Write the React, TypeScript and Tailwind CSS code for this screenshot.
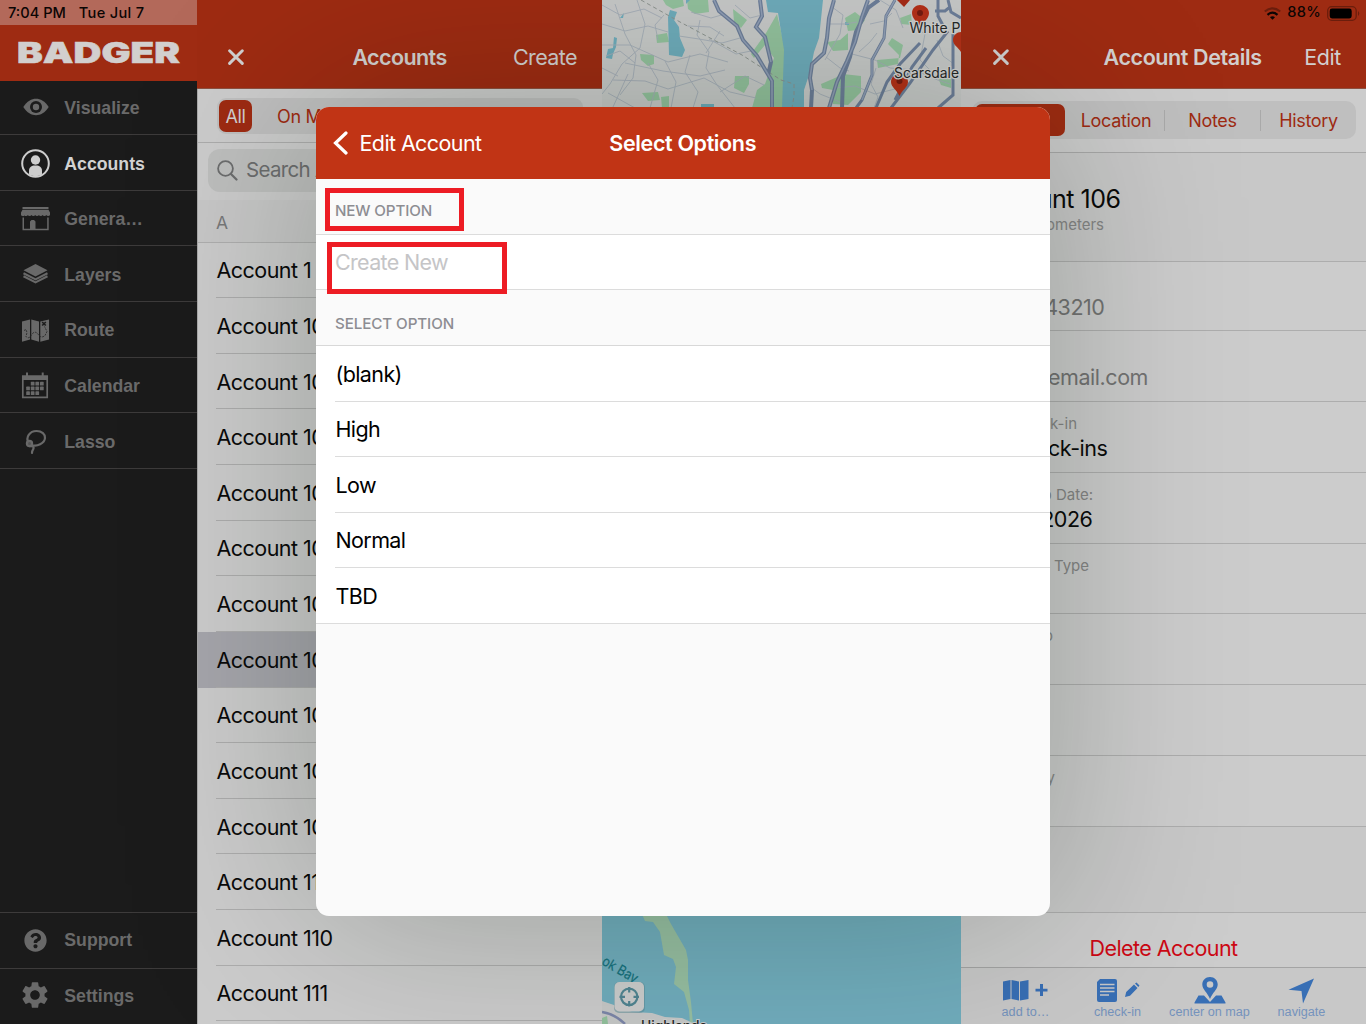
import React from 'react'
import { FaQuestionCircle } from 'react-icons/fa'
import { MdSettings } from 'react-icons/md'

const accounts = [
    'Account 1', 'Account 100', 'Account 101', 'Account 102', 'Account 103',
    'Account 104', 'Account 105', 'Account 106', 'Account 107', 'Account 108',
    'Account 109', 'Account 11', 'Account 110', 'Account 111',
]

const options = ['(blank)', 'High', 'Low', 'Normal', 'TBD']

const details = [
    { label: '', value: '9876543210', muted: true, labelWidth: 'w-[100px]', valueWidth: 'w-[143.5px]' },
    { label: '', value: 'test@email.com', muted: true, labelWidth: 'w-[100px]', valueWidth: 'w-[187px]' },
    { label: 'Last Check-in', value: 'No Check-ins', muted: false, labelWidth: 'w-[116px]', valueWidth: 'w-[146.5px]' },
    { label: 'Follow Up Date:', value: '7/7/2026', muted: false, labelWidth: 'w-[132px]', valueWidth: 'w-[131.5px]' },
    { label: 'Account Type', value: '', muted: false, labelWidth: 'w-[128px]', valueWidth: 'w-[100px]' },
    { label: 'Account Info', value: '', muted: false, labelWidth: 'w-[92px]', valueWidth: 'w-[100px]' },
    { label: '', value: '', muted: false, labelWidth: 'w-[100px]', valueWidth: 'w-[100px]' },
    { label: 'Territory', value: '', muted: false, labelWidth: 'w-[94px]', valueWidth: 'w-[100px]' },
]

const EyeIcon = () => (
    <svg width="32" height="32" viewBox="0 0 32 32">
        <path d="M4.3 15C8 9.2 12.6 6.8 17 6.8S26 9.2 29.7 15C26 20.8 21.4 23.2 17 23.2S8 20.8 4.3 15Z" fill="#696969" />
        <circle cx="17" cy="15" r="6" fill="#1b1b1b" />
        <circle cx="17" cy="15" r="3.2" fill="#696969" />
    </svg>
)

const PersonIcon = () => (
    <svg width="32" height="32" viewBox="0 0 32 32">
        <circle cx="16.5" cy="15.5" r="13.3" fill="none" stroke="#cdcdcd" strokeWidth="2" />
        <circle cx="16.5" cy="12" r="4.7" fill="#cdcdcd" />
        <path d="M10 26.5V22.5C10 19.5 12.5 17.6 14.5 17.4H18.5C20.5 17.6 23 19.5 23 22.5V26.5C19 28.5 14 28.5 10 26.5Z" fill="#cdcdcd" />
    </svg>
)

const StoreIcon = () => (
    <svg width="32" height="32" viewBox="0 0 32 32" fill="#696969">
        <rect x="3.5" y="4" width="26" height="2" />
        <path d="M3.5 6.8H29.5L31 9.5V12A2 1.6 0 0 1 27.3 12A2 1.6 0 0 1 23.6 12A2 1.6 0 0 1 19.9 12A2 1.6 0 0 1 16.2 12A2 1.6 0 0 1 12.5 12A2 1.6 0 0 1 8.8 12A2 1.6 0 0 1 5.5 12.5A2 1.6 0 0 1 2 12V9.5Z" />
        <path d="M3.5 14.5H5V25.8H11V18.5L12.5 17H15L16.5 18.5V25.8H28.2V14.5H29.7V27.3H3.5Z" />
    </svg>
)

const LayersIcon = () => (
    <svg width="32" height="32" viewBox="0 0 32 32">
        <path d="M16.5 5L28.5 11.2L16.5 17.6L4.5 11.2Z" fill="#696969" />
        <path d="M4.5 14.2L16.5 20.4L28.5 14.2M4.5 17.2L16.5 23.4L28.5 17.2" fill="none" stroke="#696969" strokeWidth="2.1" />
    </svg>
)

const RouteIcon = () => (
    <svg width="32" height="32" viewBox="0 0 32 32">
        <path d="M3 6.5L11 4.5V24.5L3 26.8ZM12.3 4.5L20 6.5V26.8L12.3 24.5ZM21.3 6.5L30 4.5V24.5L21.3 26.8Z" fill="#696969" />
        <path d="M5 15.5L7 14.5L8 17.5L7 21.5Q10 25 13 19Q16 15.5 19 19Q22 24 26 20.5L28 16.5L25.5 11.5" fill="none" stroke="#2c2c2c" strokeWidth=".9" strokeDasharray="2 1" />
        <path d="M23.2 7L26.8 10.5M26.8 7L23.2 10.5" stroke="#1d1d1d" strokeWidth="1.6" />
    </svg>
)

const CalendarIcon = () => (
    <svg width="32" height="32" viewBox="0 0 32 32">
        <path d="M3.8 6.3H28.2V27.3H3.8Z" fill="none" stroke="#696969" strokeWidth="1.7" />
        <path d="M3 5.5H29V10H3Z" fill="#696969" />
        <path d="M8 2.5V6M23.7 2.5V6" stroke="#696969" strokeWidth="2" />
        <g fill="#696969">
            <rect x="11.8" y="11.8" width="3.7" height="3.7" rx=".6" />
            <rect x="16.4" y="11.8" width="3.7" height="3.7" rx=".6" />
            <rect x="21" y="11.8" width="3.7" height="3.7" rx=".6" />
            <rect x="7.2" y="16.6" width="3.7" height="3.7" rx=".6" />
            <rect x="11.8" y="16.6" width="3.7" height="3.7" rx=".6" />
            <rect x="16.4" y="16.6" width="3.7" height="3.7" rx=".6" />
            <rect x="21" y="16.6" width="3.7" height="3.7" rx=".6" />
            <rect x="7.2" y="21.3" width="3.7" height="3.7" rx=".6" />
            <rect x="11.8" y="21.3" width="3.7" height="3.7" rx=".6" />
            <rect x="16.4" y="21.3" width="3.7" height="3.7" rx=".6" />
        </g>
    </svg>
)

const LassoIcon = () => (
    <svg width="32" height="32" viewBox="0 0 32 32" fill="none" stroke="#696969" strokeWidth="2.2" strokeLinecap="round">
        <path d="M9.5 16.5C6.5 11.5 10.5 5 17.5 5C23 5 26.3 8.2 26 12C25.5 17.5 18 21 12.5 19" />
        <circle cx="10.5" cy="17.5" r="2.6" fill="#555" />
        <path d="M10 20C12.5 20.5 14.5 20 14.6 21.5C14.8 24 12.8 24 13 27" />
    </svg>
)

const CloseIcon = () => (
    <svg width="17" height="17" viewBox="0 0 17 17" stroke="#d0d0d0" strokeWidth="2.9" strokeLinecap="round">
        <path d="M1.6 1.7L14.3 14.4M14.3 1.7L1.6 14.4" />
    </svg>
)

const MenuItem = ({ icon, label, active = false }: { icon: React.ReactNode, label: string, active?: boolean }) => {
    return (
        <div className="flex h-[55.65px] shrink-0 items-center gap-[13.3px] border-b border-[#3d3b3b] pl-[19px]">
            <div className="flex w-8 justify-center">{icon}</div>
            <span className={active ? 'text-[#d2d2d2]' : 'text-[#6a6a6a]'}>{label}</span>
        </div>
    )
}

const Sidebar = () => {
    return (
        <div className="flex w-[197px] shrink-0 flex-col bg-[#1b1b1b] font-['Liberation_Sans',sans-serif] text-[17.7px] font-bold">
            <div className="h-[25px] shrink-0 bg-[#b3695a] pl-2 font-['Inter',sans-serif] text-[14.6px] leading-[26px] font-medium text-[#0b0504]">
                <span>7:04 PM</span>
                <span className="ml-[13px] tracking-[0.3px]">Tue Jul 7</span>
            </div>
            <div className="relative z-10 h-14 shrink-0 bg-[#9e2b12]">
                <svg width="197" height="56" viewBox="0 0 197 56">
                    <text x="17" y="38.4" textLength="163" lengthAdjust="spacingAndGlyphs" fontFamily="Inter, sans-serif" fontWeight="900" fontSize="28.2" fill="#d2cfce" stroke="#d2cfce" strokeWidth=".5">BADGER</text>
                </svg>
            </div>
            <div className="-mt-[1.65px] flex flex-col *:pt-[3px]">
                <MenuItem icon={<EyeIcon />} label="Visualize" />
                <MenuItem icon={<PersonIcon />} label="Accounts" active />
                <MenuItem icon={<StoreIcon />} label="Genera…" />
                <MenuItem icon={<LayersIcon />} label="Layers" />
                <MenuItem icon={<RouteIcon />} label="Route" />
                <MenuItem icon={<CalendarIcon />} label="Calendar" />
                <MenuItem icon={<LassoIcon />} label="Lasso" />
            </div>
            <div className="mt-auto border-t border-[#3d3b3b]">
                <MenuItem icon={<FaQuestionCircle size={23} color="#696969" />} label="Support" />
                <div className="flex h-[55px] items-center gap-[13.3px] pl-[19px] text-[#6a6a6a]">
                    <div className="flex w-8 justify-center pb-1">
                        <MdSettings size={32} color="#696969" />
                    </div>
                    <span>Settings</span>
                </div>
            </div>
        </div>
    )
}

const AccountsPanel = () => {
    return (
        <div className="flex w-[405px] shrink-0 flex-col border-l border-[#a9a9a9] bg-[#cccccc]">
            <div className="-ml-px grid h-[89px] shrink-0 grid-cols-3 items-center border-b border-[#8d5040] bg-[#9e2b12] pt-[26px] pr-[25px] pl-[31px] text-[21.5px] tracking-[-0.6px] text-[#d2cfce]">
                <CloseIcon />
                <span className="-ml-[6px] text-center font-semibold">Accounts</span>
                <span className="text-right">Create</span>
            </div>
            <div className="h-[54px] shrink-0 border-b border-[#acacac] px-[19px] pt-[9px]">
                <div className="flex h-9 items-center rounded-[9px] bg-[#bfbfbf] pl-[2px] text-[18px] tracking-[-0.35px]">
                    <div className="flex h-8 w-[33px] items-center justify-center rounded-[7px] bg-[#9e2b12] text-[#d2cfce]">All</div>
                    <span className="ml-[25px] text-[#9e2b12]">On Map</span>
                </div>
            </div>
            <div className="h-[57px] shrink-0 px-[10px] pt-[6px]">
                <div className="flex h-[43px] items-center gap-2 rounded-[12px] bg-[#bebfbe] pl-[9px] text-[20.5px] tracking-[-0.7px] text-[#6c6d6e]">
                    <svg width="21" height="21" viewBox="0 0 21 21" fill="none" stroke="#6c6d6e" strokeWidth="1.8" strokeLinecap="round">
                        <circle cx="8.5" cy="8.5" r="7.4" />
                        <path d="M14 14L19.5 19.5" strokeWidth="2.2" />
                    </svg>
                    <span>Search Accounts</span>
                </div>
            </div>
            <div className="flex h-[41.6px] shrink-0 items-center bg-[#c8c8c8] pt-[5px] pl-[18px] text-[17.5px] text-[#78797a]">A</div>
            <div className="border-t border-[#afafaf]">
                {accounts.map((name) => (
                    <div key={name} className={name === 'Account 106' ? 'h-[55.63px] bg-[#a6a6ac] pl-[18px]' : 'h-[55.63px] pl-[18px]'}>
                        <div className="flex h-full items-center border-b border-[#adadad] pt-px pl-[0.5px] text-[21.5px] tracking-[-0.53px] text-[#0a0a0a]">{name}</div>
                    </div>
                ))}
            </div>
        </div>
    )
}

const MapPanel = () => {
    return (
        <svg className="shrink-0" width="359" height="1024" viewBox="602 0 359 1024">
            <rect x="602" y="0" width="359" height="1024" fill="#c6c8c7" />
            <g fill="#92c09c">
                <path d="M663 0H683L684 6L673 9L666 5ZM687 0H708L709 12L695 14L688 9ZM733 9L747 20L741 28L734 22ZM766 33L777 14L785 48L784 108H752L757 90L765 84L770 70L774 58L765 45L754 58L751 54Z" />
                <path d="M656 35L667 33L669 42L657 43ZM640 54L654 55V64L648 66L641 60ZM735 76H749V84L744 93L734 88ZM642 93L658 92L660 100L648 101ZM661 97L669 96V108H662ZM827 42L840 40L848 33V50L833 51ZM845 18L855 12L865 20L858 30L848 31ZM821 84L835 78L843 74L861 76V92L848 105L833 104V90L822 88ZM877 60L900 58L903 45L892 38L888 44L899 55L898 64L878 68ZM900 18L911 14L912 25L901 24ZM938 78H951V88L941 85Z" />
            </g>
            <g fill="#6eabba">
                <path d="M766 0H823L819 38L814 52L810 72L804 90V108H782L784 50L778 13L768 12Z" />
                <path d="M686 0H690L686 4ZM677 12L670 10L668 17L669 55L682 57L685 50L680 38L679 27L674 20ZM614 37L617 38L616 47L613 54L612 59L606 58L608 49L613 48ZM701 104H714V108H701ZM845 22L849 23V25H845ZM620 18L624 13L623 18Z" />
            </g>
            <g fill="none" stroke="#a3abb6" strokeWidth=".9">
                <path d="M602 5L620 15L644 9L662 18M602 24L625 31L648 26L668 32M615 4L625 34L636 55L633 78L620 95M602 45H630L668 62L700 54L728 62M637 0L645 24L640 48L622 64L610 84L602 94M625 63L663 71L700 76L725 70M613 80L645 81L668 89L704 78L730 92L756 98M608 93L635 108M628 74L613 107M648 63L658 80L650 108M665 61L676 82L671 108M690 55L685 72L698 92L693 108" />
                <path d="M691 12L711 18L725 14M688 26L710 27L724 36M679 36L699 39L722 43L740 38M700 20L697 35L709 52L706 68L717 85L735 108M720 31L706 53M735 5L750 18L762 15M720 92L745 76L764 85M664 15L655 25L658 40M602 68L618 76M606 56L620 51L635 63M709 39L736 54L751 51" />
                <path d="M827 24H845L857 22M832 7L843 15L840 34L825 60M826 57L840 68L849 71M859 52L870 42L877 33M870 24L884 21L892 13M852 54L875 60L890 68L915 70L935 79L950 84M835 88L855 86L875 94L895 89M812 88L820 94L840 102M910 24L925 34L920 60L932 72M880 0L896 10L903 28M937 40L943 56L954 64M876 68L871 84L878 97L874 108" />
            </g>
            <path d="M641 0L680 22L742 55L781 80L794 84V96L792 108" fill="none" stroke="#8b928e" strokeDasharray="4 3" />
            <g fill="none" stroke="#6c7d98" strokeWidth="4">
                <path d="M714 0L719 11L737 26L743 40L757 56L766 71L772 81L772 108M760 0L762 16L756 27L765 37L771 62L768 75M834 0L829 18L827 38L824 53L812 64L810 78L812 90L811 108M868 0L862 17L855 42L847 61L837 82L829 108M842 108L843 76L850 57L856 32L868 8L879 0" />
                <path d="M895 0L886 16L884 38L872 60L872 75L862 100L856 108M920 43L900 64L887 82L876 108M948 31L933 50L910 83L891 108M926 48L912 67L895 100M953 34V95L938 108M938 0V16L946 31M948 0L951 12L961 18M935 11H945L950 7" strokeWidth="3" />
            </g>
            <g fill="none" stroke="#8f9db4" strokeWidth="1.5">
                <path d="M714 0L719 11L737 26L743 40L757 56L766 71L772 81V108M760 0L762 16L756 27L765 37L771 62M834 0L829 18L827 38L824 53L812 64L810 78L812 90M868 0L862 17L855 42L847 61L837 82L829 108M895 0L886 16L884 38L872 60L872 75L862 100" />
            </g>
            <path d="M897 0H910L904 7Z" fill="#a52b16" />
            <g fill="#b33018">
                <path d="M912 13C912 8 916 5 920 5S929 8 929 13C929 19 923 22 920 28C918 22 912 19 912 13Z" />
                <circle cx="920" cy="13" r="3" fill="#741b10" />
                <path d="M953 40C953 35 957 32 961 32V52C958 47 953 45 953 40Z" />
                <path d="M891 82C891 77 895 74 899.5 74S908 77 908 82C908 87 902 90 899.5 96C897 90 891 87 891 82Z" />
                <circle cx="899.5" cy="81" r="3" fill="#741b10" />
            </g>
            <g fontFamily="Inter, sans-serif" fontSize="14" fill="#262828" stroke="#cfd0cf" strokeWidth="2.5" paintOrder="stroke" strokeLinejoin="round">
                <text x="909.5" y="32.5">White P</text>
                <text x="894" y="77.5" textLength="65" lengthAdjust="spacingAndGlyphs">Scarsdale</text>
            </g>
            <rect x="602" y="900" width="359" height="124" fill="#71adbd" />
            <path d="M640 910H664L671 924L686 950L688 960V980L691 1002L693 1024H690L689 1010L684 992L674 984L676 967L673 959L664 955L660 932L653 922L645 921Z" fill="#97bfa2" />
            <path d="M602 1001L617 1006L632 1012L652 1013L665 1017L682 1018L695 1024H602Z" fill="#c6c8c7" />
            <path d="M602 1012Q615 1014 625 1024" fill="none" stroke="#7c86a8" strokeWidth="2.5" />
            <path d="M602 1018L607 1016L608 1024H602Z" fill="#92c09c" />
            <text x="601" y="964" transform="rotate(30 601 964)" textLength="39" lengthAdjust="spacingAndGlyphs" fontFamily="Inter, sans-serif" fontSize="14" fill="#15707c" stroke="#15707c" strokeWidth=".2">ok Bay</text>
            <text x="641" y="1031" fontFamily="Inter, sans-serif" fontSize="14" fontWeight="500" fill="#262828" stroke="#cfd0cf" strokeWidth="2" paintOrder="stroke" textLength="66" lengthAdjust="spacingAndGlyphs">Highlands</text>
            <rect x="614" y="982" width="31" height="31" rx="5" fill="#5a8894" opacity=".5" />
            <rect x="614.5" y="982" width="29.5" height="29.5" rx="5" fill="#cccdcd" />
            <g fill="none" stroke="#518592" strokeWidth="2.2">
                <circle cx="629.2" cy="996.8" r="8.2" />
                <path d="M629.2 987V992.5M629.2 1001V1006.5M619.5 996.8H625M633.5 996.8H639" />
            </g>
        </svg>
    )
}

const Tool = ({ label, children }: { label: string, children: React.ReactNode }) => {
    return (
        <div className="flex w-[92px] flex-col items-center">
            <svg width="50" height="28" viewBox="0 0 50 28" fill="#386fb5">{children}</svg>
            <span className="text-[12.65px] leading-[14px] whitespace-nowrap text-[#7593bd]">{label}</span>
        </div>
    )
}

const DetailsPanel = () => {
    return (
        <div className="flex w-[405px] shrink-0 flex-col bg-[#cccccc]">
            <div className="flex h-[89px] shrink-0 flex-col border-b border-[#8d5040] bg-[#9e2b12] text-[#d2cfce]">
                <div className="flex h-[26px] items-center justify-end gap-[6px] pr-[6px] text-[14.6px] font-medium text-[#0b0504]">
                    <svg width="17" height="13" viewBox="0 0 17 13" fill="none" stroke="#0b0504" strokeWidth="2.2">
                        <path d="M.8 4.5Q8.5 -1.8 16.2 4.5" stroke="#6b1d0c" />
                        <path d="M3.5 7.8Q8.5 3.5 13.5 7.8" />
                        <path d="M6 10.2Q8.5 8.3 11 10.2L8.5 12.8Z" fill="#0b0504" stroke="none" />
                    </svg>
                    <span className="tracking-[0.3px]">88%</span>
                    <svg width="33" height="15" viewBox="0 0 33 15">
                        <rect x=".7" y=".7" width="28.5" height="13.6" rx="4" fill="none" stroke="#6b1d0c" strokeWidth="1.3" />
                        <rect x="2.7" y="2.6" width="22" height="9.8" rx="2.3" fill="#000" />
                        <path d="M31 5Q33.5 7.5 31 10Z" fill="#6b1d0c" />
                    </svg>
                </div>
                <div className="flex h-[62px] items-center pr-[25px] pl-8 text-[21.5px] tracking-[-0.4px]">
                    <CloseIcon />
                    <span className="ml-[93.5px] pt-px font-semibold">Account Details</span>
                    <span className="ml-auto pt-px">Edit</span>
                </div>
            </div>
            <div className="h-[64px] shrink-0 border-b border-[#a8a8a8] pt-3 pl-[11px]">
                <div className="grid h-[38px] w-[384px] grid-cols-4 items-center rounded-[10px] bg-[#bfbfbf] text-center text-[18px] tracking-[-0.35px] text-[#9e2b12]">
                    <div className="ml-[3px] h-8 w-[90px] rounded-[7px] bg-[#9e2b12]" />
                    <span>Location</span>
                    <span className="border-l border-[#a9a9a9] leading-[21px]">Notes</span>
                    <span className="border-l border-[#a9a9a9] leading-[21px]">History</span>
                </div>
            </div>
            <div className="flex h-[108.8px] shrink-0 flex-col justify-center border-b border-[#adadad] bg-[#c8c8c8] pt-[9px]">
                <div className="w-[159.5px] text-right text-[25px] leading-7 tracking-[-0.5px] text-[#0a0a0a]">Account 106</div>
                <div className="w-[143px] text-right text-[15px] leading-6 text-[#858585]">kilometers</div>
            </div>
            <div className="shrink-0">
                {details.map((row, i) => (
                    <div key={i} className="h-[70.8px] border-b border-[#adadad] pt-[10px] first:h-[69.4px] first:pt-[9px]">
                        <div className={row.labelWidth + ' h-[23px] text-right text-[15px] leading-[23px] whitespace-nowrap text-[#858585]'}>{row.label}</div>
                        <div className={row.valueWidth + ' text-right text-[21.5px] leading-[27px] tracking-[-0.45px] whitespace-nowrap ' + (row.muted ? 'text-[#737373]' : 'text-[#0a0a0a]')}>{row.value}</div>
                    </div>
                ))}
            </div>
            <div className="h-[86.5px] shrink-0 border-b border-[#adadad] bg-[#c8c8c8]" />
            <div className="flex h-[55.2px] shrink-0 items-center justify-center border-b border-[#a4a4a4] pt-[15px] text-[21.5px] tracking-[-0.57px] text-[#cc0814]">Delete Account</div>
            <div className="flex flex-1 bg-[#c8c8c8] pt-[8.5px] pl-[18.5px] font-['Liberation_Sans',sans-serif]">
                <Tool label="add to…">
                    <path d="M2 4.5L9.5 3V22L2 23.5ZM10.5 3L18 4.5V23.5L10.5 22ZM19 4.5L27.5 3V22L19 23.5Z" />
                    <path d="M39 7H42V11.7H46.5V14.5H42V19H39V14.5H34.5V11.7H39Z" />
                </Tool>
                <Tool label="check-in">
                    <path d="M7 2H22Q24 2 24 4V23Q24 25 22 25H6Q4 25 4 23V5Z" />
                    <path d="M7 7.5H21.5M7 11H21.5M7 14.5H21.5M7 18H16" stroke="#c8c8c8" strokeWidth="1.3" />
                    <path d="M32 20L33.2 15L41 7.5L44.5 11L37 18.7ZM42 6.5L43.5 5.5L46.5 8.5L45.3 10Z" />
                </Tool>
                <Tool label="center on map">
                    <path d="M13.5 18.5H19L25 25L31 18.5H36.5L40.5 25.5V26.5H9.5V25.5Z" />
                    <path fillRule="evenodd" d="M25 0C29.5 0 32.7 3.3 32.7 7.5C32.7 12.5 27.5 15.5 25 22C22.5 15.5 17.3 12.5 17.3 7.5C17.3 3.3 20.5 0 25 0ZM25 4.2A3.3 3.3 0 1 0 25 10.8A3.3 3.3 0 1 0 25 4.2Z" />
                </Tool>
                <Tool label="navigate">
                    <path d="M37 1.5L26 26.5L24.5 14L11.5 12.8Z" />
                </Tool>
            </div>
        </div>
    )
}

const SelectModal = () => {
    return (
        <div className="absolute inset-0 flex items-center justify-center pb-px">
            <div className="flex h-[809px] w-[734px] flex-col overflow-hidden rounded-[13px] bg-[#fafafa] shadow-[0_0_190px_rgba(0,20,0,0.25)]">
                <div className="grid h-[72px] shrink-0 grid-cols-3 items-center bg-[#c13415] pl-[16.5px] text-[21.5px] text-white">
                    <div className="flex items-center gap-3">
                        <svg width="15" height="24" viewBox="0 0 15 24" fill="none" stroke="#fff" strokeWidth="3.2" strokeLinecap="round">
                            <path d="M13 2L2.5 12L13 22" />
                        </svg>
                        <span className="tracking-[-0.6px]">Edit Account</span>
                    </div>
                    <span className="-ml-[17px] text-center font-semibold tracking-[-0.36px] whitespace-nowrap">Select Options</span>
                </div>
                <div className="flex h-14 shrink-0 items-center border-b border-[#dcdcdc] pt-[10px] pl-[19px] text-[15.2px] font-medium tracking-[-0.15px] text-[#8d8d92]">NEW OPTION</div>
                <div className="flex h-[55px] shrink-0 items-center border-b border-[#dcdcdc] bg-white pt-px pl-[19px] text-[21.5px] tracking-[-0.68px] text-[#c5c5c7]">Create New</div>
                <div className="flex h-14 shrink-0 items-center border-b border-[#d8d8d8] pt-[13px] pl-[19px] text-[15.2px] font-medium tracking-[-0.1px] text-[#8d8d92]">SELECT OPTION</div>
                <div className="shrink-0 border-b border-[#dcdcdc] bg-white pl-[19px] text-[21.5px] tracking-[-0.62px] text-black">
                    {options.map((option) => (
                        <div key={option} className="flex h-[55.5px] items-center border-b border-[#dcdcdc] pt-px pl-[0.5px] last:h-[54.5px] last:border-b-0">{option}</div>
                    ))}
                </div>
            </div>
        </div>
    )
}

export default function App() {
    return (
        <div className="relative flex h-[1024px] w-[1366px] overflow-hidden font-['Inter',sans-serif]">
            <Sidebar />
            <AccountsPanel />
            <MapPanel />
            <DetailsPanel />
            <SelectModal />
            {/* highlight frames */}
            <div className="absolute top-[188px] left-[325px] h-[43px] w-[139px] border-5 border-[#ed1c24]" />
            <div className="absolute top-[242px] left-[327px] h-[52px] w-[180px] border-5 border-[#ed1c24]" />
        </div>
    )
}
